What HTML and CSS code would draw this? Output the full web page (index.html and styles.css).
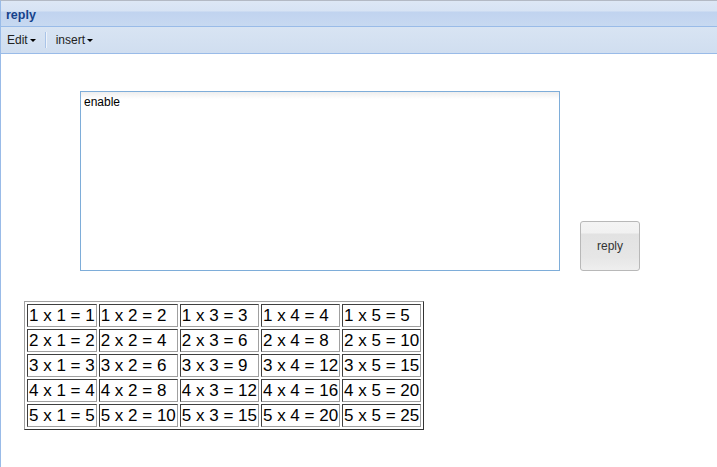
FILE: index.html
```html
<!DOCTYPE html>
<html>
<head>
<meta charset="utf-8">
<link rel="stylesheet" href="styles.css">
</head>
<body>
<div class="panel">
  <div class="header"><span class="title">reply</span></div>
  <div class="toolbar">
    <span class="menu">Edit<span class="arrow"></span></span>
    <span class="sep"></span>
    <span class="menu">insert<span class="arrow"></span></span>
  </div>
  <div class="body">
    <div class="form-row">
      <textarea class="editor">enable</textarea>
      <button class="btn">reply</button>
    </div>
    <table class="times">
      <tr><td>1 x 1 = 1</td><td>1 x 2 = 2</td><td>1 x 3 = 3</td><td>1 x 4 = 4</td><td>1 x 5 = 5</td></tr>
      <tr><td>2 x 1 = 2</td><td>2 x 2 = 4</td><td>2 x 3 = 6</td><td>2 x 4 = 8</td><td>2 x 5 = 10</td></tr>
      <tr><td>3 x 1 = 3</td><td>3 x 2 = 6</td><td>3 x 3 = 9</td><td>3 x 4 = 12</td><td>3 x 5 = 15</td></tr>
      <tr><td>4 x 1 = 4</td><td>4 x 2 = 8</td><td>4 x 3 = 12</td><td>4 x 4 = 16</td><td>4 x 5 = 20</td></tr>
      <tr><td>5 x 1 = 5</td><td>5 x 2 = 10</td><td>5 x 3 = 15</td><td>5 x 4 = 20</td><td>5 x 5 = 25</td></tr>
    </table>
  </div>
</div>
</body>
</html>
```

FILE: styles.css
```css
html, body {
  margin: 0;
  padding: 0;
  background: #fff;
  font-family: "Liberation Sans", Arial, sans-serif;
}
.panel {
  width: 717px;
  height: 467px;
  box-sizing: border-box;
  border-left: 1px solid #99bbe8;
  border-top: 1px solid #b3b9c4;
  overflow: hidden;
}
.header {
  height: 25px;
  border-bottom: 1px solid #99bbe8;
  background: linear-gradient(to bottom, #dde7f5 0, #d7e3f4 10px, #c0d3ef 11px, #c7d9f1 25px);
  padding-left: 5px;
  line-height: 26px;
}
.title {
  font-weight: bold;
  font-size: 12.5px;
  color: #15428b;
}
.toolbar {
  height: 26px;
  border-bottom: 1px solid #99bbe8;
  background: linear-gradient(to bottom, #d8e4f3, #d0def0);
  display: flex;
  align-items: center;
  padding-left: 6px;
  font-size: 12px;
  color: #222;
}
.menu {
  display: flex;
  align-items: center;
}
.arrow {
  width: 0;
  height: 0;
  margin-left: 2px;
  margin-top: 1px;
  border-left: 3px solid transparent;
  border-right: 3px solid transparent;
  border-top: 3px solid #000;
}
.sep {
  width: 1px;
  height: 16px;
  background: #a9c4e8;
  border-right: 1px solid #eef3fa;
  margin: 0 9px 0 9px;
}
.body {
  padding-top: 37px;
}
.form-row {
  display: flex;
  align-items: flex-end;
  padding-left: 79px;
}
.editor {
  width: 480px;
  height: 180px;
  box-sizing: border-box;
  margin: 0;
  border: 1px solid #7eadd9;
  background: linear-gradient(to bottom, #eeeeee 0, #ffffff 7px);
  font-family: "Liberation Sans", Arial, sans-serif;
  font-size: 12px;
  line-height: 14px;
  color: #000;
  padding: 3px 3px;
  resize: none;
  outline: none;
}
.btn {
  margin: 0 0 0 20px;
  width: 60px;
  height: 50px;
  box-sizing: border-box;
  border: 1px solid #b8b8b8;
  border-radius: 3px;
  background: linear-gradient(to bottom, #f4f4f4 0, #f1f1f1 11px, #e2e2e2 12px, #e6e6e6 35px, #efefef 49px);
  font-family: "Liberation Sans", Arial, sans-serif;
  font-size: 12px;
  color: #333;
  padding: 0;
}
.times {
  margin: 30px 0 0 23px;
  border-collapse: separate;
  border-spacing: 2px;
  border: 1px solid;
  border-color: #a0a0a0 #333 #333 #a0a0a0;
  font-size: 17px;
  line-height: 19px;
  color: #000;
}
.times td {
  border: 1px solid;
  border-color: #404040 #a0a0a0 #a0a0a0 #404040;
  padding: 1px;
  white-space: nowrap;
}
```
